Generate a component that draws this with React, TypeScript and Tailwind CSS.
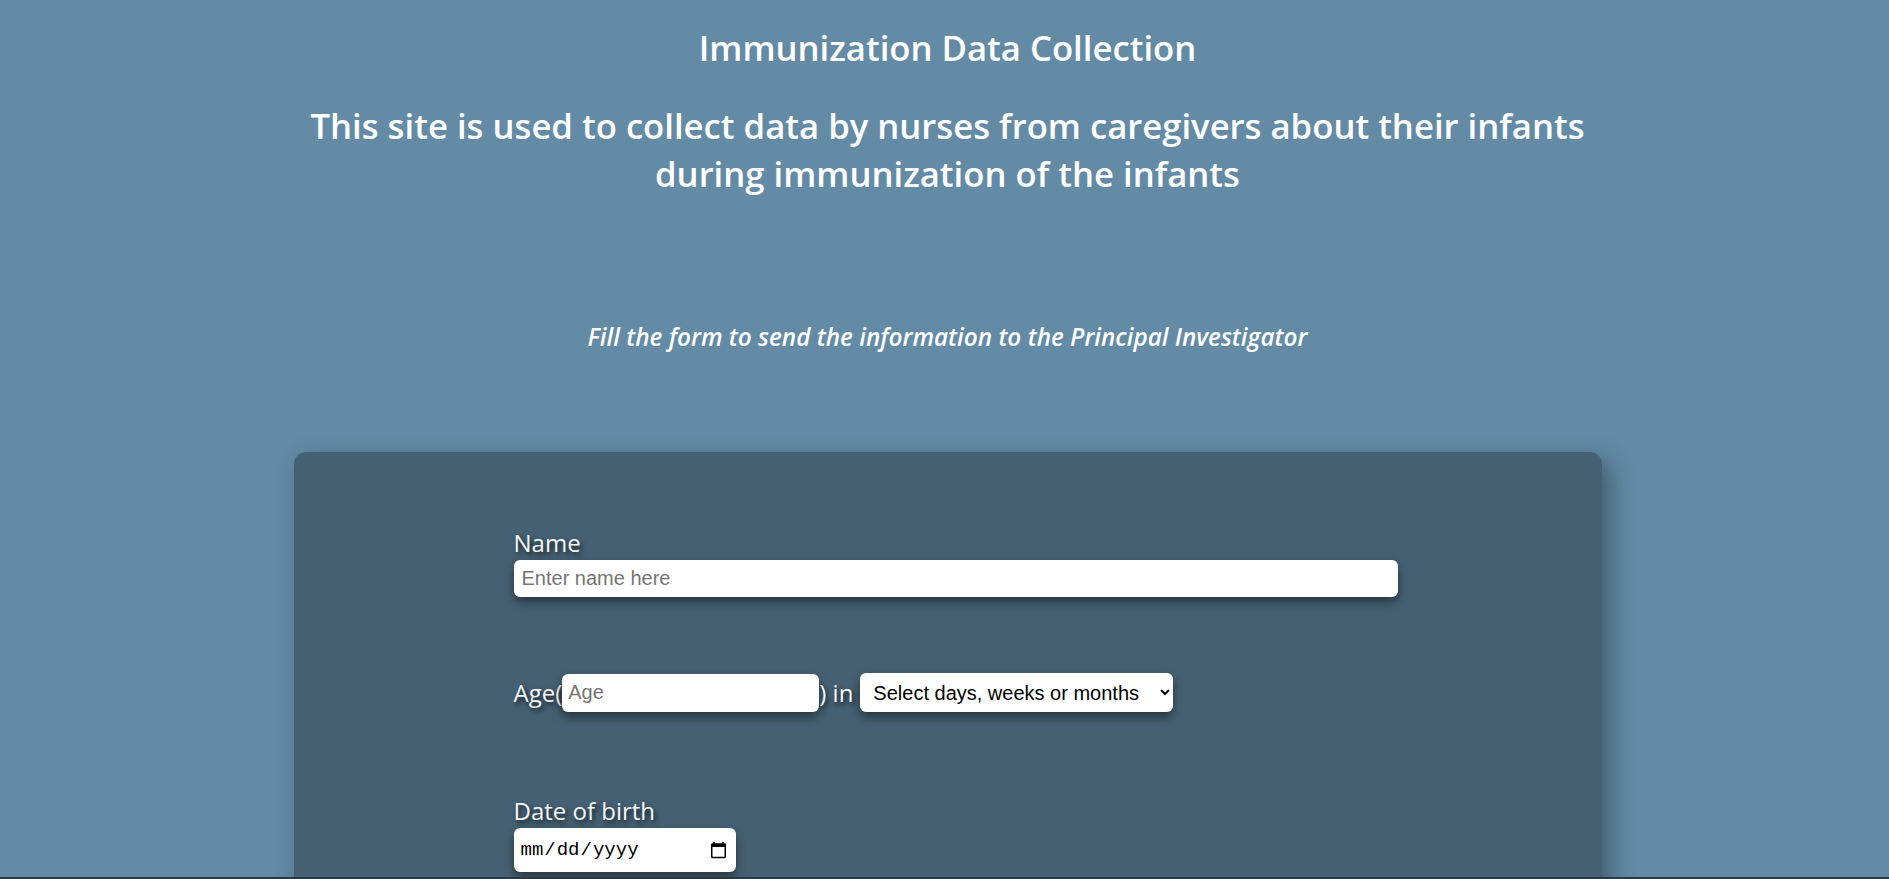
import React, { useState } from "react";

export default function App() {
  const [name, setName] = useState<string>("");
  const [age, setAge] = useState<string>("");
  const [unit, setUnit] = useState<string>("");
  const [dob, setDob] = useState<string>("");

  const labelClass =
    "text-[24px] leading-[31px] text-[#f4f6f8] [text-shadow:2px_3px_5px_rgba(0,0,0,0.7)]";
  const fieldClass =
    "bg-white rounded-[6px] shadow-[0_5px_10px_rgba(0,0,0,0.45)] outline-none font-['Liberation_Sans',Arial,sans-serif] text-[20px] text-black placeholder:text-[#757575]";

  return (
    <div className="min-h-screen bg-[#638ba6] font-['Open_Sans',sans-serif] pl-[6px] pb-10">
      <h1 className="pt-[24px] text-center text-[34.7px] leading-[48px] font-semibold text-white">
        Immunization Data Collection
      </h1>
      <h2 className="mt-[30px] mx-auto w-[1300px] text-center text-[34.7px] leading-[48px] font-semibold text-white">
        This site is used to collect data by nurses from caregivers about their infants
        during immunization of the infants
      </h2>
      <p className="mt-[122px] text-center text-[24.3px] leading-[33px] italic font-semibold text-white">
        Fill the form to send the information to the Principal Investigator
      </p>

      <form className="mt-[99px] mx-auto w-[1308px] h-[620px] rounded-xl bg-[#456072] shadow-[8px_8px_24px_rgba(0,0,0,0.35)] pl-[220px] pt-[75px]">
        <div className="flex flex-col">
          <label className={`${labelClass} mb-[2px]`}>Name</label>
          <input
            type="text"
            value={name}
            onChange={(e) => setName(e.target.value)}
            placeholder="Enter name here"
            className={`${fieldClass} w-[884px] h-[37px] px-[8px]`}
          />
        </div>

        <div className="mt-[76px] flex items-center h-[39px]">
          <span className={labelClass}>Age(</span>
          <input
            type="text"
            value={age}
            onChange={(e) => setAge(e.target.value)}
            placeholder="Age"
            className={`${fieldClass} w-[257px] h-[38px] px-[6px]`}
          />
          <span className={labelClass}>) in</span>
          <select
            value={unit}
            onChange={(e) => setUnit(e.target.value)}
            className={`${fieldClass} ml-[7px] w-[313px] h-[39px] pl-[9px] pr-[8px]`}
          >
            <option value="">Select days, weeks or months</option>
            <option value="days">Days</option>
            <option value="weeks">Weeks</option>
            <option value="months">Months</option>
          </select>
        </div>

        <div className="mt-[83px] flex flex-col">
          <label className={`${labelClass} mb-[2px]`}>Date of birth</label>
          <input
            type="date"
            value={dob}
            onChange={(e) => setDob(e.target.value)}
            className="bg-white rounded-[6px] shadow-[0_5px_10px_rgba(0,0,0,0.45)] outline-none font-['Liberation_Mono',monospace] text-[19px] text-black w-[222px] h-[44px] px-[6px]"
          />
        </div>
      </form>

      <div className="fixed bottom-0 left-0 right-0 h-[2px] bg-[#273a47]" />
    </div>
  );
}
